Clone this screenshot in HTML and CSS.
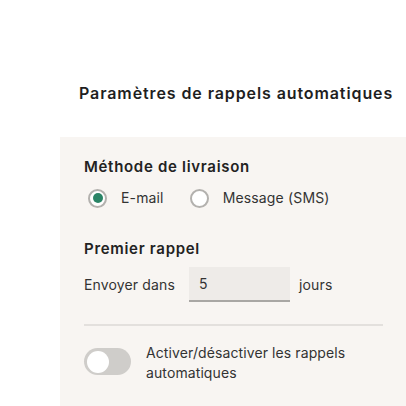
FILE: index.html
```html
<!DOCTYPE html>
<html lang="fr">
<head>
<meta charset="utf-8">
<link rel="stylesheet" href="styles.css">
</head>
<body>
<div class="page">
  <h1 class="title">Paramètres de rappels automatiques</h1>
  <section class="panel">
    <h2 class="label">Méthode de livraison</h2>
    <div class="radios">
      <label class="radio"><span class="ring on"><span class="dot"></span></span>E-mail</label>
      <label class="radio"><span class="ring"></span>Message (SMS)</label>
    </div>
    <h2 class="label second">Premier rappel</h2>
    <div class="send">
      <span class="send-text">Envoyer dans</span>
      <span class="input">5</span>
      <span>jours</span>
    </div>
    <hr class="divider">
    <div class="toggle-row">
      <span class="toggle"><span class="knob"></span></span>
      <span class="toggle-text">Activer/désactiver les rappels automatiques</span>
    </div>
  </section>
</div>
</body>
</html>
```
FILE: styles.css
```css
html, body { margin: 0; padding: 0; background: #fff; }
body { font-family: Inter, "Liberation Sans", sans-serif; color: #222; }
.page { padding: 83px 0 0 60px; }
.title { margin: 0 0 34px 19px; font-size: 16px; font-weight: 600; line-height: 20px; letter-spacing: 0.9px; color: #1f1f1f; }
.panel { background: #f8f5f2; padding: 20px 23px 40px 24px; }
.label { margin: 0; font-size: 15px; font-weight: 600; line-height: 20px; letter-spacing: 0.7px; color: #222; }
.label.second { margin-top: 31px; }
.radios { display: flex; gap: 22px; margin-top: 11px; align-items: center; }
.radio { display: flex; align-items: center; gap: 14px; font-size: 14px; color: #333; line-height: 20px; letter-spacing: 0.15px; }
.ring { width: 15px; height: 15px; border: 2px solid #b3b1ae; border-radius: 50%; display: flex; align-items: center; justify-content: center; margin-left: 4px; background: #fff; flex: none; }
.dot { width: 10px; height: 10px; border-radius: 50%; background: #2a8466; }
.send { display: flex; align-items: center; gap: 9px; margin-top: 8px; font-size: 14px; color: #333; letter-spacing: 0.15px; }
.send-text { min-width: 96px; }
.input { width: 91px; height: 33px; line-height: 33px; padding-left: 10px; background: #eeebe8; border-bottom: 2px solid #a9a7a4; }
.divider { border: 0; height: 2px; background: #e3e0dd; margin: 22px 0 0 0; }
.toggle-row { display: flex; align-items: flex-start; gap: 15px; margin-top: 17px; }
.toggle { width: 47px; height: 27px; border-radius: 14px; background: #cfcdca; flex: none; display: flex; align-items: center; margin-top: 5px; }
.knob { width: 22px; height: 22px; border-radius: 50%; background: #fff; margin-left: 3px; }
.toggle-text { font-size: 14px; line-height: 20px; color: #333; letter-spacing: 0.1px; }
```
